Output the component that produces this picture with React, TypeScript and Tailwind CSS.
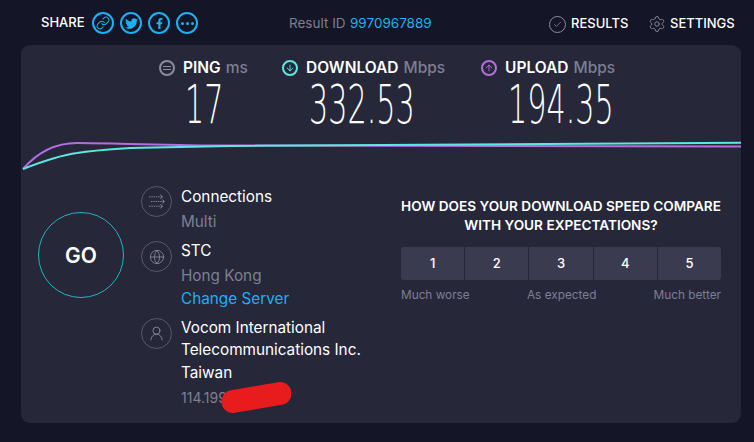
import React from 'react';
import { Check, Settings, Link as LinkIcon, Globe, UserRound, ArrowDown, ArrowUp } from 'lucide-react';
import { FaTwitter, FaFacebookF } from 'react-icons/fa';

const ShareIcon = ({ children }: { children: React.ReactNode }) => (
    <div className="w-[22px] h-[22px] rounded-full border-2 border-[#1cb1f0] flex items-center justify-center text-[#1cb1f0]">
        {children}
    </div>
);

const Stat = ({ icon, label, unit, value, width, valueClass }: {
    icon: React.ReactNode; label: string; unit: string; value: string; width: string; valueClass: string;
}) => (
    <div className={`flex flex-col ${width}`}>
        <div className="flex items-center h-4 gap-[8px] text-[15.5px] leading-4 whitespace-nowrap">
            {icon}
            <span className="font-semibold text-white">{label}</span>
            <span className="text-[#7e7f93] font-medium -ml-[3px]">{unit}</span>
        </div>
        <div className={`mt-[4px] h-[50px] text-[53px] leading-[50px] font-['DejaVu_Sans',sans-serif] font-extralight text-white origin-left scale-x-[0.57] whitespace-nowrap ${valueClass}`}>
            {value}
        </div>
    </div>
);

const InfoIcon = ({ children }: { children: React.ReactNode }) => (
    <div className="w-[31px] h-[31px] rounded-full border border-[#585a6d] flex items-center justify-center text-[#8b8c9e] shrink-0">
        {children}
    </div>
);

export default function App() {
    const ratings = ['1', '2', '3', '4', '5'];

    return (
        <div className="w-[754px] h-[442px] bg-[#141526] overflow-hidden font-['Inter',sans-serif] flex flex-col px-[21px] pt-[11px]">
            {/* Header */}
            <div className="h-[34px] flex items-start">
                <div className="flex items-center h-[24px] pl-[20px] w-[268px] shrink-0">
                    <span className="text-[13px] font-medium text-white w-[51px]">SHARE</span>
                    <div className="flex gap-[6px]">
                        <ShareIcon><LinkIcon size={14} strokeWidth={1.75} /></ShareIcon>
                        <ShareIcon><FaTwitter size={13} /></ShareIcon>
                        <ShareIcon><FaFacebookF size={11} /></ShareIcon>
                        <ShareIcon>
                            <span className="flex gap-[2px]">
                                <span className="w-[3px] h-[3px] rounded-full bg-[#1cb1f0]" />
                                <span className="w-[3px] h-[3px] rounded-full bg-[#1cb1f0]" />
                                <span className="w-[3px] h-[3px] rounded-full bg-[#1cb1f0]" />
                            </span>
                        </ShareIcon>
                    </div>
                </div>
                <div className="flex items-center h-[24px] text-[13.5px] w-[260px] shrink-0">
                    <span className="text-[#7e7f93] w-[61px]">Result ID</span>
                    <span className="text-[#1cb1f0]">9970967889</span>
                </div>
                <div className="flex items-center h-[26px] text-[13px] font-medium text-white shrink-0">
                    <div className="w-[17px] h-[17px] rounded-full border border-[#8b8c9e] flex items-center justify-center text-[#8b8c9e] mr-[5px]">
                        <Check size={9} strokeWidth={2} />
                    </div>
                    <span className="w-[77px]">RESULTS</span>
                    <Settings size={18} strokeWidth={1.25} className="text-[#8b8c9e] mr-[4px]" />
                    <span>SETTINGS</span>
                </div>
            </div>

            {/* Main panel */}
            <div className="w-[720px] h-[378px] bg-[#262739] rounded-[9px] flex flex-col overflow-hidden">
                <div className="flex pt-[15px] pl-[138px] h-[95px]">
                    <Stat
                        width="w-[123px]"
                        label="PING"
                        unit="ms"
                        value="17"
                        valueClass="ml-[26px]"
                        icon={
                            <div className="w-4 h-4 rounded-full border-2 border-[#8b8c9e] flex flex-col items-center justify-center gap-[2px]">
                                <span className="w-2 h-px bg-[#8b8c9e]" />
                                <span className="w-2 h-px bg-[#8b8c9e]" />
                            </div>
                        }
                    />
                    <Stat
                        width="w-[199px]"
                        label="DOWNLOAD"
                        unit="Mbps"
                        value="332.53"
                        valueClass="ml-[27px]"
                        icon={
                            <div className="w-4 h-4 rounded-full border-2 border-[#5ce8e0] flex items-center justify-center text-[#5ce8e0]">
                                <ArrowDown size={10} strokeWidth={2.25} />
                            </div>
                        }
                    />
                    <Stat
                        width="w-[190px]"
                        label="UPLOAD"
                        unit="Mbps"
                        value="194.35"
                        valueClass="ml-[27px]"
                        icon={
                            <div className="w-4 h-4 rounded-full border-2 border-[#b36ee0] flex items-center justify-center text-[#b36ee0]">
                                <ArrowUp size={10} strokeWidth={2.25} />
                            </div>
                        }
                    />
                </div>

                {/* Speed graph */}
                <svg viewBox="0 0 720 40" className="w-[720px] h-[40px] shrink-0 block" fill="none">
                    <path d="M2 29 C15 14 33 3 56 3 C90 3 130 5 200 5.500 L720 6.500" stroke="#b36ee0" strokeWidth="2" />
                    <path d="M2 29 C20 22 40 15 56 13 C75 10 95 9 109 8 C150 7 180 6.500 209 6 L720 2.700" stroke="#5ce8e0" strokeWidth="2" />
                </svg>

                <div className="flex pl-[17px] relative">
                    <div className="w-[86px] h-[86px] mt-[32px] pt-px rounded-full border border-[#22b5c4] flex items-center justify-center shrink-0 text-[21px] font-semibold text-white">
                        GO
                    </div>

                    <div className="w-[260px] ml-[17px] flex flex-col text-[15.3px] text-white pt-[6px]">
                        <div className="flex gap-[9px] h-[55px]">
                            <InfoIcon>
                                <svg viewBox="0 0 18 16" className="w-[17px] h-[15px]" fill="none" stroke="currentColor" strokeWidth="1">
                                    <path d="M1 3H15M3 8H17M1 13H15" strokeDasharray="1.500 1" />
                                    <path d="M13 1L15.500 3L13 5M15 6L17.500 8L15 10M13 11L15.500 13L13 15" />
                                </svg>
                            </InfoIcon>
                            <div>
                                <div className="leading-[22px]">Connections</div>
                                <div className="leading-[22px] mt-[3px] text-[#7e7f93]">Multi</div>
                            </div>
                        </div>
                        <div className="flex gap-[9px] h-[77px]">
                            <InfoIcon><Globe size={16} strokeWidth={1.25} /></InfoIcon>
                            <div className="-mt-[1px]">
                                <div className="leading-[22px]">STC</div>
                                <div className="leading-[22px] mt-[3px] text-[#7e7f93]">Hong Kong</div>
                                <div className="leading-[22px] mt-[1px] text-[#1cb1f0]">Change Server</div>
                            </div>
                        </div>
                        <div className="flex gap-[9px]">
                            <InfoIcon><UserRound size={17} strokeWidth={1.25} /></InfoIcon>
                            <div className="-mt-[1px] relative">
                                <div className="leading-[22px]">Vocom International</div>
                                <div className="leading-[22px] whitespace-nowrap">Telecommunications Inc.</div>
                                <div className="leading-[23px]">Taiwan</div>
                                <div className="leading-[22px] mt-[3px] text-[#7e7f93] text-[14px]">114.199</div>
                                {/* Red marker scribble over the IP address */}
                                <svg viewBox="0 0 70 31" className="absolute left-[40px] top-[65px] w-[70px] h-[31px]" fill="none">
                                    <path d="M12 19.500 L59 11.500" stroke="#e81c1c" strokeWidth="23" strokeLinecap="round" />
                                </svg>
                            </div>
                        </div>
                    </div>

                    <div className="w-[320px] pt-[17px] flex flex-col">
                        <div className="leading-[19px] text-[13.6px] font-semibold text-white text-center whitespace-nowrap">
                            HOW DOES YOUR DOWNLOAD SPEED COMPARE<br />WITH YOUR EXPECTATIONS?
                        </div>
                        <div className="mt-[12px] grid grid-cols-5 gap-px rounded-[3px] overflow-hidden">
                            {ratings.map((rating) => (
                                <div key={rating} className="h-[33px] bg-[#3a3b4e] flex items-center justify-center text-[13px] font-medium text-white">
                                    {rating}
                                </div>
                            ))}
                        </div>
                        <div className="mt-[7px] flex justify-between text-[11.8px] text-[#7e7f93]">
                            <span>Much worse</span>
                            <span>As expected</span>
                            <span>Much better</span>
                        </div>
                    </div>
                </div>
            </div>
        </div>
    );
}
